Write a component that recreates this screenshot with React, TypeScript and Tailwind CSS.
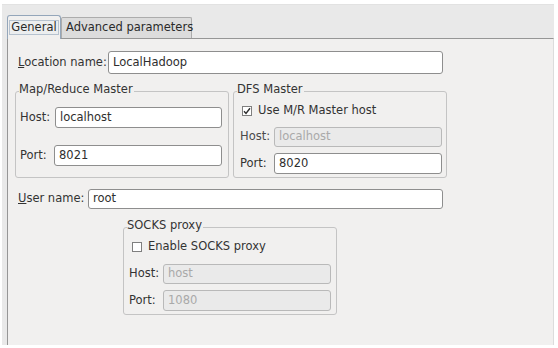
import React from 'react'

const font = "font-['DejaVu_Sans',sans-serif]"

function Field({ value, w, h = 21, disabled = false }: { value: string; w: number; h?: number; disabled?: boolean }) {
  return (
    <div
      className={`flex items-center pl-[4px] rounded-[3px] border ${
        disabled ? 'bg-[#eaeaea] border-[#b9b9b9] text-[#a9a9a9]' : 'bg-white border-[#8e8e8e] text-[#2e2e2e]'
      }`}
      style={{ width: w, height: h }}
    >
      {value}
    </div>
  )
}

function Check({ checked }: { checked: boolean }) {
  return (
    <div className="w-[10px] h-[10px] border border-[#7f7f7f] bg-white flex items-center justify-center">
      {checked && (
        <svg width="8" height="8" viewBox="0 0 8 8">
          <path d="M1 4.2 L3 6.4 L7 1.2" fill="none" stroke="#2e2e2e" strokeWidth="1.4" />
        </svg>
      )}
    </div>
  )
}

function Group({ title, className, children }: { title: string; className: string; children: React.ReactNode }) {
  return (
    <div className={`relative border border-[#c4c4c4] rounded-[3px] ${className}`}>
      <span className="absolute left-[3px] top-[-10px] bg-[#f1f0ef] leading-[14px] pr-[1px]">{title}</span>
      {children}
    </div>
  )
}

export default function App() {
  return (
    <div className={`w-[558px] h-[348px] bg-white pt-[4px] pl-[2px] text-[11.5px] text-[#333333] ${font}`}>
      <div className="w-[552px] h-[341px] bg-[#e9e9e9] flex flex-col">
        {/* tab strip */}
        <div className="h-[34px] flex items-end pl-[5px] border-t border-[#e2e2e2]">
          <div className="w-[54px] h-[24px] border border-b-0 border-[#94a6ba] rounded-t-[3px] bg-[#f1f0ef] flex items-center justify-center relative z-10 mb-[-1px]">
            <span className="border border-[#b6c2cf] bg-[#eceeef] px-[1px] leading-[13px] text-[#2a2a2a]">General</span>
          </div>
          <div className="w-[131px] h-[21px] border border-b-0 border-[#acacac] rounded-t-[2px] bg-[#dcdcdc] flex items-center pl-[4px] whitespace-nowrap text-[#2a2a2a]">
            Advanced parameters
          </div>
        </div>
        {/* pane */}
        <div className="flex-1 ml-[5px] border-l border-t border-[#969696] border-r border-r-[#dcdcdc] bg-[#f1f0ef] pl-[10px]">
          <div className="mt-[12px] flex items-center h-[23px]">
            <span className="w-[90px]">
              <u>L</u>ocation name:
            </span>
            <Field value="LocalHadoop" w={335} h={23} />
          </div>

          <div className="mt-[17px] ml-[-3px] flex gap-[4px]">
            <Group title="Map/Reduce Master" className="w-[214px] h-[87px] pt-[15px] pl-[4px]">
              <div className="flex items-center h-[21px]">
                <span className="w-[35px]">Host:</span>
                <Field value="localhost" w={167} />
              </div>
              <div className="flex items-center h-[21px] mt-[17px]">
                <span className="w-[34px]">Port:</span>
                <Field value="8021" w={168} />
              </div>
            </Group>
            <Group title="DFS Master" className="w-[214px] h-[87px] pt-[11px] pl-[6px]">
              <div className="flex items-center h-[16px] ml-[2px] gap-[6px]">
                <Check checked />
                <span>Use M/R Master host</span>
              </div>
              <div className="flex items-center h-[20px] mt-[8px]">
                <span className="w-[34px] text-[#4a4a4a]">Host:</span>
                <Field value="localhost" w={168} h={20} disabled />
              </div>
              <div className="flex items-center h-[21px] mt-[6px]">
                <span className="w-[34px]">Port:</span>
                <Field value="8020" w={168} />
              </div>
            </Group>
          </div>

          <div className="mt-[11px] flex items-center h-[20px]">
            <span className="w-[70px]">
              <u>U</u>ser name:
            </span>
            <Field value="root" w={355} h={20} />
          </div>

          <Group title="SOCKS proxy" className="mt-[18px] ml-[105px] w-[214px] h-[88px] pt-[11px] pl-[5px]">
            <div className="flex items-center h-[16px] ml-[3px] gap-[6px]">
              <Check checked={false} />
              <span>Enable SOCKS proxy</span>
            </div>
            <div className="flex items-center h-[20px] mt-[9px]">
              <span className="w-[34px]">Host:</span>
              <Field value="host" w={168} h={20} disabled />
            </div>
            <div className="flex items-center h-[21px] mt-[6px]">
              <span className="w-[34px]">Port:</span>
              <Field value="1080" w={168} disabled />
            </div>
          </Group>
        </div>
      </div>
    </div>
  )
}
